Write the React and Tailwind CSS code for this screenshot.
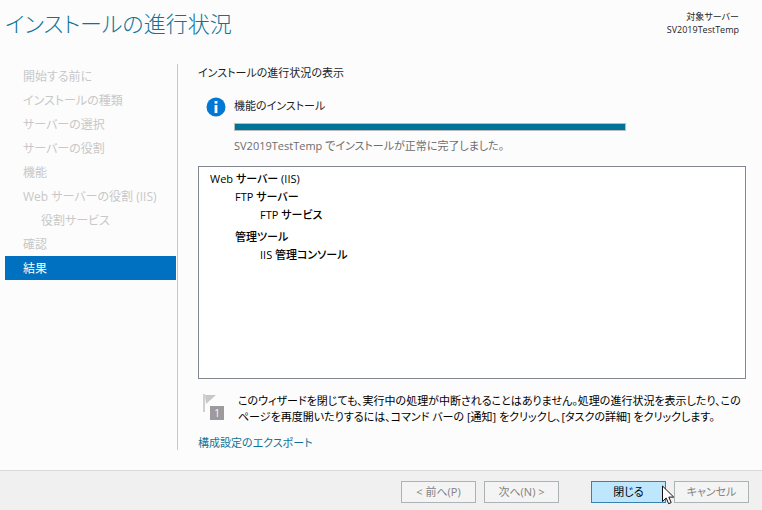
const steps = [
  { label: '開始する前に' },
  { label: 'インストールの種類' },
  { label: 'サーバーの選択' },
  { label: 'サーバーの役割' },
  { label: '機能' },
  { label: 'Web サーバーの役割 (IIS)' },
  { label: '役割サービス', nested: true },
  { label: '確認' },
  { label: '結果', current: true },
];

function InfoIcon() {
  return (
    <svg className="size-5 shrink-0" viewBox="0 0 20 20" aria-hidden="true">
      <circle cx="10" cy="10" r="9.5" fill="#0078d4" />
      <rect x="8.6" y="4" width="2.8" height="2.6" fill="#fff" />
      <rect x="8.6" y="8" width="2.8" height="8" fill="#fff" />
    </svg>
  );
}

function FlagIcon() {
  return (
    <div className="relative h-7 w-6 shrink-0" aria-hidden="true">
      <svg className="size-full" viewBox="0 0 24 28">
        <path d="M1 1h2v18H1z" fill="#d0d0d0" />
        <path d="M3 2h11L4 11z" fill="#c8c8c8" />
        <rect x="8" y="13" width="14" height="14" fill="#9c9a9c" />
      </svg>
      <span className="absolute top-3 left-2 w-3.5 text-center text-[10px] leading-4 text-white">1</span>
    </div>
  );
}

function Cursor() {
  return (
    <svg className="pointer-events-none absolute top-1 left-[71px] z-10 h-5 w-3" viewBox="0 0 12 20" aria-hidden="true">
      <path d="M.5 1v15.5l3.7-3.5 2.4 5.7 2.6-1.1-2.4-5.5h4.9z" fill="#fff" stroke="#111" strokeWidth="1" />
    </svg>
  );
}

function WizardButton({ children, primary }) {
  return (
    <button
      type="button"
      disabled={!primary}
      className={
        primary
          ? 'h-[22px] w-[75px] border border-[#3c7fb1] bg-[#bee6fd] text-center text-black'
          : 'h-[22px] w-[75px] border border-[#adb2b5] bg-[#f4f4f4] text-center text-[#838383]'
      }
    >
      {children}
    </button>
  );
}

export default function App() {
  return (
    <div
      lang="ja"
      className="flex min-h-screen flex-col bg-[#fcfcfc] font-['Open_Sans','Noto_Sans_CJK_JP',sans-serif] text-[11px] leading-4 text-[#1e1e1e] [font-feature-settings:'palt']"
    >
      <header className="flex h-16 items-start justify-between pr-[23px] pl-[5px]">
        <h1 className="pt-[7px] text-[22px] leading-8 font-light text-[#0f7397]">インストールの進行状況</h1>
        <p className="pt-2.5 text-right text-[9px] leading-[13px]">
          対象サーバー
          <br />
          SV2019TestTemp
        </p>
      </header>

      <div className="flex flex-1">
        <nav className="mb-5 w-[178px] shrink-0 border-r border-[#c8c8c8] pr-px pl-[5px]" aria-label="ウィザードの手順">
          <ol className="text-[12px] leading-[22px] text-[#c8c8c8]">
            {steps.map((step) => (
              <li
                key={step.label}
                aria-current={step.current ? 'step' : undefined}
                className={
                  step.current
                    ? 'bg-[#0070c0] pt-0.5 pl-[18px] text-white'
                    : step.nested
                      ? 'pt-0.5 pl-9 whitespace-nowrap'
                      : 'pt-0.5 pl-[18px] whitespace-nowrap'
                }
              >
                {step.label}
              </li>
            ))}
          </ol>
        </nav>

        <main className="flex min-w-0 flex-1 flex-col pt-px pr-4 pb-[19px] pl-5">
          <h2>インストールの進行状況の表示</h2>

          <section className="mt-4 flex gap-2 pl-2">
            <InfoIcon />
            <div className="min-w-0 flex-1 pt-px pr-[120px]">
              <label htmlFor="install" className="block">
                機能のインストール
              </label>
              <progress
                id="install"
                value="100"
                max="100"
                className="mt-[9px] block h-2 w-full appearance-none border border-[#bcbcbc] [&::-webkit-progress-bar]:bg-white [&::-webkit-progress-value]:bg-[#007399]"
              />
              <p className="mt-[7px] text-[#6d6d6d]">SV2019TestTemp でインストールが正常に完了しました。</p>
            </div>
          </section>

          <div className="mt-3 flex-1 border border-[#828790] bg-white px-[11px] py-[3px] leading-[18px] font-medium text-black">
            <ul>
              <li>
                Web サーバー (IIS)
                <ul className="flex flex-col gap-1 pl-[25px]">
                  <li>
                    FTP サーバー
                    <ul className="pl-[25px]">
                      <li>FTP サービス</li>
                    </ul>
                  </li>
                  <li>
                    管理ツール
                    <ul className="pl-[25px]">
                      <li>IIS 管理コンソール</li>
                    </ul>
                  </li>
                </ul>
              </li>
            </ul>
          </div>

          <div className="mt-3.5 flex items-start gap-3 pl-1">
            <FlagIcon />
            <p className="flex-1 text-black">
              このウィザードを閉じても、実行中の処理が中断されることはありません。処理の進行状況を表示したり、このページを再度開いたりするには、コマンド バーの [通知] をクリックし、[タスクの詳細] をクリックします。
            </p>
          </div>
          <a href="#export" className="mt-2.5 self-start text-[#0f7397]">
            構成設定のエクスポート
          </a>
        </main>
      </div>

      <footer className="flex h-10 items-start justify-end gap-2 border-t border-[#dadada] bg-[#f0f0f0] pt-2.5 pr-[13px]">
        <WizardButton>&lt; 前へ(P)</WizardButton>
        <WizardButton>次へ(N) &gt;</WizardButton>
        <div className="relative ml-6">
          <WizardButton primary>閉じる</WizardButton>
          <Cursor />
        </div>
        <WizardButton>キャンセル</WizardButton>
      </footer>
    </div>
  );
}
